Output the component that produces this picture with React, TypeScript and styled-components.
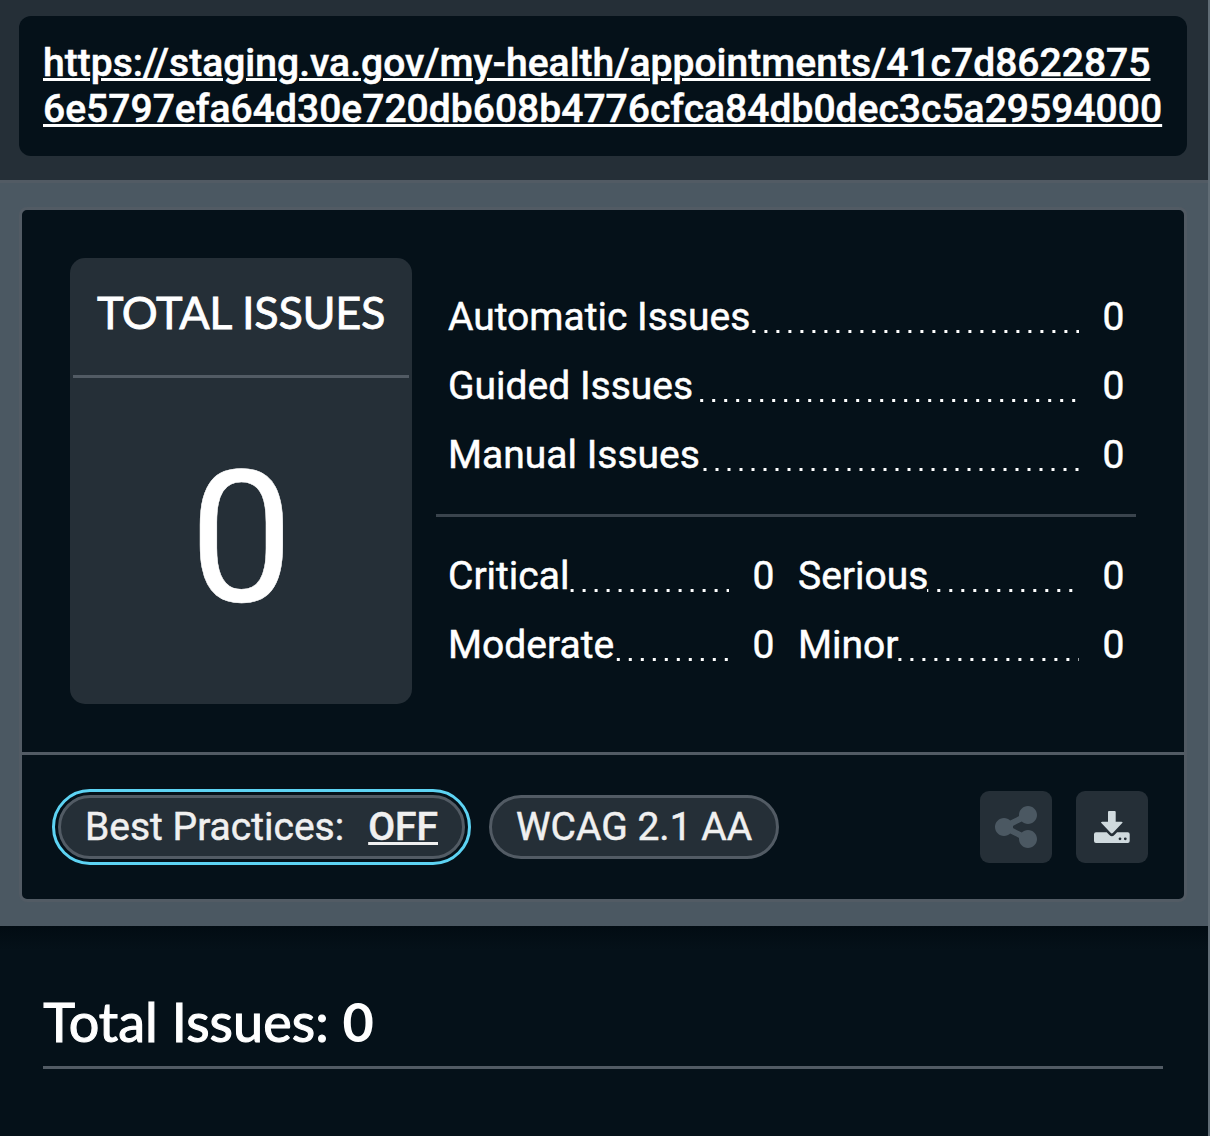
import React from 'react';
import styled, { createGlobalStyle } from 'styled-components';
import { FaShareNodes } from 'react-icons/fa6';

const color = {
  ink: '#051119',
  surface: '#252f37',
  slate: '#4b5862',
  border: '#525b64',
  rule: '#3a444d',
  white: '#ffffff',
  soft: '#f0f0f0',
  focus: '#5dd3f3',
  icon: '#d0dade',
};

const GlobalStyle = createGlobalStyle`
  * { box-sizing: border-box; }
  body {
    margin: 0;
    background: ${color.ink};
    color: ${color.white};
    font-family: Roboto, "Liberation Sans", sans-serif;
    font-size: 39px;
    line-height: 45px;
    -webkit-text-stroke: 0.5px currentColor;
  }
`;

const Page = styled.main`
  width: 1210px;
  height: 1136px;
  overflow: hidden;
  border-right: 2px solid #616d76;
`;

const UrlBar = styled.header`
  height: 183px;
  padding: 16px 21px 24px 19px;
  background: ${color.surface};
  border-bottom: 3px solid ${color.border};
`;

const UrlBox = styled.div`
  height: 140px;
  padding: 24px;
  border-radius: 12px;
  background: ${color.ink};
  line-height: 46px;
`;

const UrlLink = styled.a`
  color: ${color.white};
  font-weight: 500;
  letter-spacing: 0.02px;
  word-break: break-all;
  text-decoration: underline;
  text-decoration-thickness: 3px;
`;

const Panel = styled.section`
  height: 743px;
  padding: 24px 21px 24px 19px;
  background: ${color.slate};
`;

const Card = styled.div`
  height: 695px;
  border: 3px solid ${color.border};
  border-radius: 8px;
  background: ${color.ink};
`;

const Summary = styled.div`
  display: flex;
  gap: 24px;
  height: 542px;
  padding: 48px;
`;

const TotalTile = styled.div`
  display: flex;
  flex-direction: column;
  width: 342px;
  height: 446px;
  padding: 0 3px;
  border-radius: 15px;
  background: ${color.surface};
  text-align: center;
`;

const TileTitle = styled.h2`
  height: 120px;
  margin: 0;
  padding-top: 25px;
  border-bottom: 3px solid ${color.border};
  font: 400 45px/58px Lato, "Liberation Sans", sans-serif;
  letter-spacing: -0.3px;
  -webkit-text-stroke-width: 0.8px;
`;

const TileValue = styled.div`
  padding: 51px 0 0 1px;
  font-size: 184px;
  line-height: 218px;
`;

const Details = styled.div`
  width: 700px;
  padding-top: 25px;
`;

const Group = styled.div<{ $columns: number }>`
  display: grid;
  grid-template-columns: repeat(${p => p.$columns}, 1fr);
`;

const Rule = styled.hr`
  height: 3px;
  margin: 24px 0 25px;
  border: 0;
  background: ${color.rule};
`;

const Row = styled.div`
  display: flex;
  height: 69px;
  padding: 12px 11.5px 12px 12px;
`;

const Leader = styled.span<{ $shift: number }>`
  flex: 1;
  height: 3px;
  margin: 35px 23.5px 0 -1px;
  background: linear-gradient(to right, ${color.white} 3px, transparent 3px) ${p => p.$shift}px 0 / 12px 3px repeat-x;
`;

const Actions = styled.div`
  display: flex;
  align-items: center;
  height: 147px;
  padding: 0 36px;
  border-top: 3px solid ${color.border};
`;

const Pill = styled.button<{ $width: number; $focused?: boolean }>`
  display: flex;
  align-items: center;
  justify-content: space-between;
  width: ${p => p.$width}px;
  height: 64px;
  margin: 0 24px 0 0;
  padding: 0 24px;
  border: 3px solid ${color.border};
  border-radius: 32px;
  background: ${color.surface};
  color: ${color.soft};
  font: inherit;
  -webkit-text-stroke: 0.5px ${color.soft};
  white-space: nowrap;
  outline: ${p => (p.$focused ? `3px solid ${color.focus}` : 'none')};
  outline-offset: 3px;
`;

const PillState = styled.span`
  font-weight: 500;
  text-decoration: underline;
  text-decoration-thickness: 3px;
`;

const IconGroup = styled.div`
  display: flex;
  gap: 24px;
  margin-left: auto;
`;

const IconButton = styled.button<{ $muted?: boolean }>`
  display: flex;
  align-items: center;
  justify-content: center;
  width: 72px;
  height: 72px;
  padding: 0;
  border: 0;
  border-radius: 9px;
  background: ${color.surface};
  color: ${p => (p.$muted ? color.slate : color.icon)};
`;

const Results = styled.section`
  height: 210px;
  padding: 63px 45px 0 43px;
  background: linear-gradient(#020c13, ${color.ink} 24px);
`;

const ResultsTitle = styled.h1`
  height: 80px;
  margin: 0;
  border-bottom: 3px solid ${color.border};
  font: 400 54px/66px Lato, "Liberation Sans", sans-serif;
  letter-spacing: 0.05px;
  text-indent: 0.3px;
  -webkit-text-stroke-width: 1.1px;
`;

const ResultsCount = styled.span`
  font-weight: 700;
  -webkit-text-stroke-width: 0;
`;

const DownloadIcon = () => (
  <svg width="36" height="32" viewBox="0 0 36 32" fill="currentColor">
    <path d="M15 0H20.700Q21.700 0 21.700 1V10.700H27.500Q29.400 10.700 28 12.300L19 21.800Q17.800 23 16.600 21.800L7.600 12.300Q6.200 10.700 8.100 10.700H14V1Q14 0 15 0Z" />
    <path
      fillRule="evenodd"
      d="M2 21.300H12.700L15.400 24Q17.900 26.400 20.400 24L23.100 21.300H33.700Q35.700 21.300 35.700 23.300V30Q35.700 32 33.700 32H2Q0 32 0 30V23.300Q0 21.300 2 21.300ZM26 26.400a1.400 1.400 0 1 0 0 2.800a1.400 1.400 0 1 0 0-2.800ZM31.300 26.400a1.400 1.400 0 1 0 0 2.800a1.400 1.400 0 1 0 0-2.800Z"
    />
  </svg>
);

type Count = { label: string; value: number; shift: number };

const sources: Count[] = [
  { label: 'Automatic Issues', value: 0, shift: 3.4 },
  { label: 'Guided Issues', value: 0, shift: 8.2 },
  { label: 'Manual Issues', value: 0, shift: 4.5 },
];

const impacts: Count[] = [
  { label: 'Critical', value: 0, shift: 2.6 },
  { label: 'Serious', value: 0, shift: 10.3 },
  { label: 'Moderate', value: 0, shift: 3.8 },
  { label: 'Minor', value: 0, shift: 0.4 },
];

const CountRow = ({ label, value, shift }: Count) => (
  <Row>
    <span>{label}</span>
    <Leader $shift={shift} />
    <span>{value}</span>
  </Row>
);

const url =
  'https://staging.va.gov/my-health/appointments/41c7d86228756e5797efa64d30e720db608b4776cfca84db0dec3c5a29594000';

export default function App() {
  return (
    <>
      <GlobalStyle />
      <Page>
        <UrlBar>
          <UrlBox>
            <UrlLink href="#">{url}</UrlLink>
          </UrlBox>
        </UrlBar>
        <Panel>
          <Card>
            <Summary>
              <TotalTile>
                <TileTitle>TOTAL ISSUES</TileTitle>
                <TileValue>0</TileValue>
              </TotalTile>
              <Details>
                <Group $columns={1}>
                  {sources.map(s => <CountRow key={s.label} {...s} />)}
                </Group>
                <Rule />
                <Group $columns={2}>
                  {impacts.map(s => <CountRow key={s.label} {...s} />)}
                </Group>
              </Details>
            </Summary>
            <Actions>
              <Pill $width={407} $focused>
                <span>Best Practices:</span>
                <PillState>OFF</PillState>
              </Pill>
              <Pill $width={290}>WCAG 2.1 AA</Pill>
              <IconGroup>
                <IconButton $muted aria-label="Share">
                  <FaShareNodes size={48} />
                </IconButton>
                <IconButton aria-label="Download">
                  <DownloadIcon />
                </IconButton>
              </IconGroup>
            </Actions>
          </Card>
        </Panel>
        <Results>
          <ResultsTitle>
            Total Issues: <ResultsCount>0</ResultsCount>
          </ResultsTitle>
        </Results>
      </Page>
    </>
  );
}
